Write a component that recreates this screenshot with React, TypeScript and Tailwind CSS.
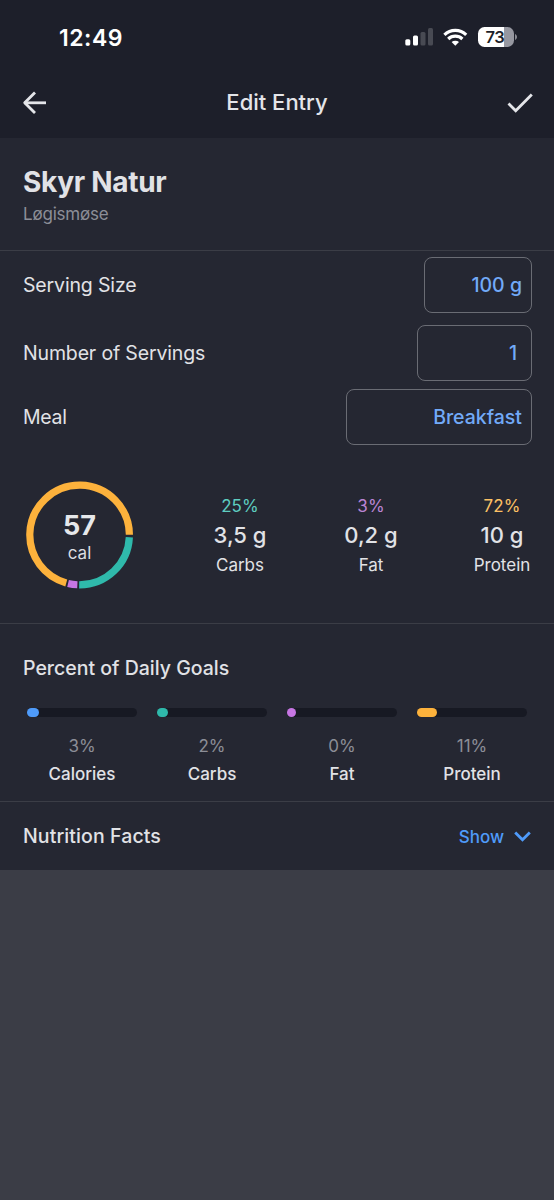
import React from 'react';

interface Macro {
  name: string;
  percent: string;
  amount: string;
  color: string;
}

interface Goal {
  name: string;
  percent: string;
  fill: number;
  color: string;
}

const macros: Macro[] = [
  { name: 'Carbs', percent: '25%', amount: '3,5 g', color: 'text-[#5ecdc0]' },
  { name: 'Fat', percent: '3%', amount: '0,2 g', color: 'text-[#bb84d4]' },
  { name: 'Protein', percent: '72%', amount: '10 g', color: 'text-[#fcc064]' },
];

const goals: Goal[] = [
  { name: 'Calories', percent: '3%', fill: 12, color: 'bg-[#4f9bfa]' },
  { name: 'Carbs', percent: '2%', fill: 10.5, color: 'bg-[#2fb9ab]' },
  { name: 'Fat', percent: '0%', fill: 9, color: 'bg-[#c776e3]' },
  { name: 'Protein', percent: '11%', fill: 20, color: 'bg-[#fdb23c]' },
];

const StatusBar: React.FC = () => (
  <div className="flex h-[74px] items-center justify-between pr-[36px] pl-[59px] text-white">
    <span className="pt-px text-[23px] leading-[28px] font-semibold tracking-[0.5px]">12:49</span>
    <div className="flex items-center">
      <svg width="28" height="18" viewBox="0 0 28 18" fill="#fff">
        <rect x="0.3" y="11.2" width="5" height="6.3" rx="1.5" />
        <rect x="8" y="7.6" width="5" height="9.9" rx="1.5" />
        <rect x="15.5" y="4" width="5" height="13.5" rx="1.5" fill="#484a53" />
        <rect x="23" y="0" width="5" height="17.5" rx="1.5" fill="#484a53" />
      </svg>
      <svg className="ml-[10px]" width="25" height="18" viewBox="0 0 25 18" fill="none" stroke="#fff" strokeWidth="3.2">
        <path d="M1.4 6.8a15.8 15.8 0 0 1 21.8 0" />
        <path d="M5.2 11a10.3 10.3 0 0 1 14.2 0" />
        <path d="M8.6 14.1a5.5 5.5 0 0 1 7.4 0l-3.7 3.7z" fill="#fff" stroke="none" />
      </svg>
      <div className="ml-[10px] flex h-[20px] w-[36px] items-center justify-center rounded-[6.5px] bg-linear-to-r from-white from-[73%] to-[#9697a0] to-[73%]">
        <span className="mr-[2px] text-[16.5px] leading-none font-semibold tracking-[-0.3px] text-[#1d1f2a]">73</span>
      </div>
      <svg className="ml-px" width="3" height="8" viewBox="0 0 3 8">
        <path d="M0 1c1.2.5 2 1.6 2 3s-.8 2.5-2 3z" fill="#8a8b93" />
      </svg>
    </div>
  </div>
);

const NavBar: React.FC = () => (
  <div className="flex h-[64px] items-center justify-between pr-[21px] pb-[7px] pl-[22px] text-[#e4e5e9]">
    <svg width="25" height="24" viewBox="0 0 25 24" fill="none" stroke="currentColor" strokeWidth="2.8">
      <path d="M24 11.8H2.5" />
      <path d="M13 1.5 2.7 11.8 13 22.1" strokeLinejoin="round" />
    </svg>
    <h1 className="pb-px text-[22px] leading-[28px] font-medium">Edit Entry</h1>
    <svg width="26" height="20" viewBox="0 0 26 20" fill="none" stroke="currentColor" strokeWidth="2.8">
      <path d="M1.5 10.5 8.7 17.7 24.8 1.5" />
    </svg>
  </div>
);

const CalorieRing: React.FC = () => (
  <div className="relative flex h-[108px] w-[108px] flex-col items-center">
    <svg className="absolute inset-0" width="108" height="108" viewBox="0 0 108 108" fill="none" strokeWidth="7.2">
      <g transform="translate(-0.4 0) rotate(1.2 54 54)">
        <circle cx="54" cy="54" r="49.8" stroke="#2fb9ab" pathLength="100" strokeDasharray="24.4 75.6" strokeDashoffset="-0.4" />
        <circle cx="54" cy="54" r="49.8" stroke="#c776e3" pathLength="100" strokeDasharray="3 97" strokeDashoffset="-25.4" />
        <circle cx="54" cy="54" r="49.8" stroke="#fdb23c" pathLength="100" strokeDasharray="70.6 29.4" strokeDashoffset="-29" />
      </g>
    </svg>
    <span className="mt-[30px] mr-px text-[27px] leading-[30px] font-bold text-[#e6e7ea]">57</span>
    <span className="mt-[2px] mr-px text-[17px] leading-[20px] text-[#dcdde2]">cal</span>
  </div>
);

const App: React.FC = () => {
  return (
    <div className="min-h-[1200px] w-[554px] overflow-hidden bg-[#3b3d46] font-['Inter',sans-serif] text-[#e1e2e6]">
      <header className="h-[138px] bg-[#1d1f2a]">
        <StatusBar />
        <NavBar />
      </header>

      <main className="h-[732px] bg-[#252732]">
        <section className="h-[113px] border-b border-[#3b3d46] px-[23px] pt-[27px]">
          <h2 className="text-[28px] leading-[34px] font-bold tracking-[-0.3px]">Skyr Natur</h2>
          <p className="mt-[4px] text-[17px] leading-[22px] tracking-[-0.2px] text-[#8c8e97]">Løgismøse</p>
        </section>

        <section className="h-[373px] border-b border-[#3b3d46] pt-[6px] pr-[22px] pl-[23px] text-[19.5px] leading-[28px]">
          <div className="flex h-[56px] items-center justify-between">
            <span className="tracking-[-0.15px]">Serving Size</span>
            <div className="flex h-[56px] w-[108px] items-center justify-end rounded-[8px] border border-[#6a6c74] pr-[9px] font-medium text-[#72aaf8]">100 g</div>
          </div>
          <div className="mt-[12px] flex h-[56px] items-center justify-between">
            <span className="tracking-[-0.15px]">Number of Servings</span>
            <div className="flex h-[56px] w-[115px] items-center justify-end rounded-[8px] border border-[#6a6c74] pr-[14px] font-medium text-[#72aaf8]">1</div>
          </div>
          <div className="mt-[8px] flex h-[56px] items-center justify-between">
            <span className="tracking-[-0.3px]">Meal</span>
            <div className="flex h-[56px] w-[186px] items-center justify-end rounded-[8px] border border-[#6a6c74] pr-[9px] font-medium text-[#72aaf8]">Breakfast</div>
          </div>

          <div className="mt-[36px] -mr-[10px] ml-[3px] flex items-start">
            <CalorieRing />
            <div className="ml-[66px] flex grow justify-between pt-[14px]">
              {macros.map((macro) => (
                <div key={macro.name} className="flex w-[80px] flex-col items-center">
                  <span className={`text-[17px] leading-[22px] tracking-[0.1px] ${macro.color}`}>{macro.percent}</span>
                  <span className="mt-[3px] text-[22px] leading-[30px] font-medium">{macro.amount}</span>
                  <span className="mt-[4px] text-[17px] leading-[22px]">{macro.name}</span>
                </div>
              ))}
            </div>
          </div>
        </section>

        <section className="h-[178px] border-b border-[#3b3d46] pt-[30px]">
          <h3 className="pl-[23px] text-[19.5px] leading-[28px] font-medium">Percent of Daily Goals</h3>
          <div className="mt-[26px] flex gap-[20px] px-[27px]">
            {goals.map((goal) => (
              <div key={goal.name} className="flex w-[110px] flex-col items-center">
                <div className="h-[9px] w-full rounded-full bg-[#171923]">
                  <div className={`h-full rounded-full ${goal.color}`} style={{ width: goal.fill }} />
                </div>
                <span className="mt-[18px] text-[17px] leading-[22px] text-[#8c8e97]">{goal.percent}</span>
                <span className="mt-[6px] text-[17px] leading-[22px] font-medium">{goal.name}</span>
              </div>
            ))}
          </div>
        </section>

        <section className="flex h-[68px] items-center justify-between pr-[23px] pl-[23px]">
          <h3 className="text-[19.5px] leading-[28px] font-medium tracking-[0.1px]">Nutrition Facts</h3>
          <button className="flex items-center gap-[10px] text-[17px] leading-[22px] font-medium text-[#4f9bfa]">
            <span className="pt-px">Show</span>
            <svg width="17" height="11" viewBox="0 0 17 11" fill="none" stroke="currentColor" strokeWidth="2.8">
              <path d="M1.2 1.5 8.5 8.8 15.8 1.5" />
            </svg>
          </button>
        </section>
      </main>
    </div>
  );
};

export default App;
